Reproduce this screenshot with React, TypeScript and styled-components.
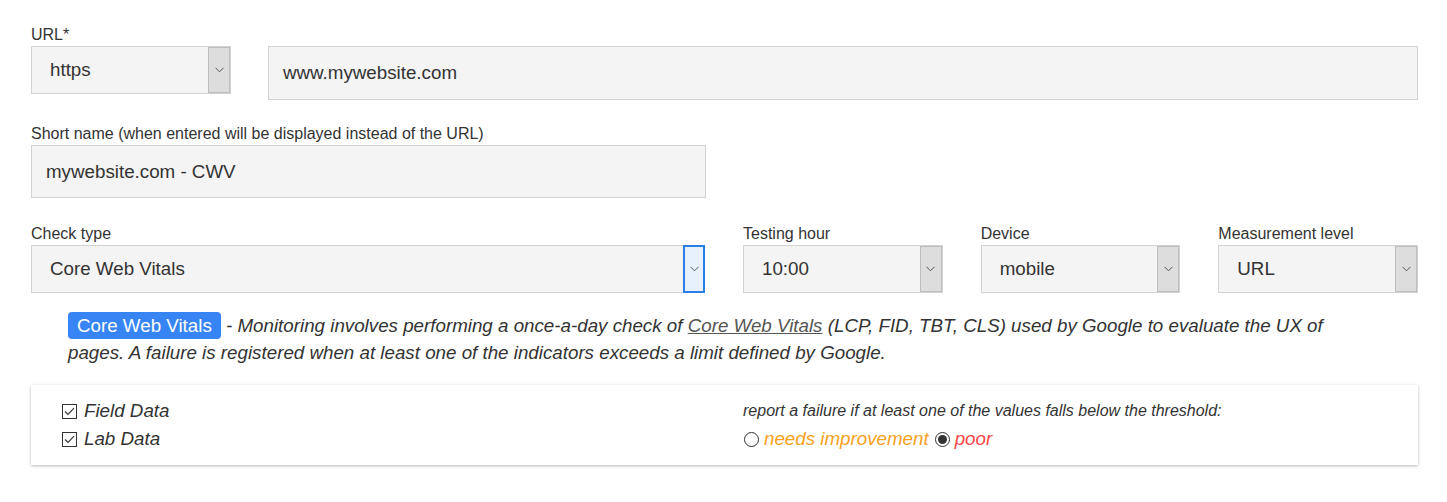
import styled, { createGlobalStyle } from "styled-components";

const GlobalStyle = createGlobalStyle`
  body {
    margin: 0;
    background: #fff;
    font-family: "Liberation Sans", Arial, sans-serif;
    color: #333;
  }
`;

const Page = styled.div`
  width: 1387px;
  padding: 23px 29px 20px 31px;
  display: flex;
  flex-direction: column;
`;

const Field = styled.div<{ $mb?: number }>`
  display: flex;
  flex-direction: column;
  margin-bottom: ${(p) => p.$mb ?? 0}px;
`;

const Label = styled.label`
  font-size: 16px;
  line-height: 20px;
  padding-top: 2px;
  margin-bottom: 1px;
  color: #333;
`;

const UrlRow = styled.div`
  display: flex;
  align-items: flex-start;
  gap: 37px;
  margin-bottom: 22px;
`;

const TypeRow = styled.div`
  display: grid;
  grid-template-columns: 674px repeat(3, 1fr);
  column-gap: 38px;
`;

const Box = styled.div<{ $h: number; $w?: number; $pad: number; $grow?: boolean }>`
  box-sizing: border-box;
  height: ${(p) => p.$h}px;
  width: ${(p) => (p.$w ? `${p.$w}px` : "100%")};
  flex: ${(p) => (p.$grow ? "1 1 auto" : "none")};
  background: #f4f4f4;
  border: 1px solid #d2d2d2;
  display: flex;
  align-items: center;
  justify-content: space-between;
  padding-left: ${(p) => p.$pad}px;
  font-size: 18.75px;
  color: #333;
`;

const Arrow = styled.span<{ $focus?: boolean }>`
  box-sizing: border-box;
  align-self: stretch;
  width: 22px;
  display: flex;
  align-items: center;
  justify-content: center;
  background: ${(p) => (p.$focus ? "#e6f1fc" : "#dddddd")};
  border: ${(p) => (p.$focus ? "2px solid #2a7fe6" : "1px solid #bdbdbd")};
  margin: ${(p) => (p.$focus ? "-1px" : "0")};
  svg {
    width: 9px;
    height: 6px;
  }
`;

const Chevron = () => (
  <svg viewBox="0 0 9 6">
    <polyline points="0.5,0.8 4.5,4.8 8.5,0.8" fill="none" stroke="#555" strokeWidth="1" />
  </svg>
);

const Select = ({ value, width, focus }: { value: string; width?: number; focus?: boolean }) => (
  <Box $h={48} $w={width} $pad={18}>
    <span>{value}</span>
    <Arrow $focus={focus}>
      <Chevron />
    </Arrow>
  </Box>
);

const Description = styled.p`
  margin: 19px 0 19px;
  padding: 0 50px 0 37px;
  font-size: 18.75px;
  line-height: 27px;
  font-style: italic;
  color: #333;
`;

const Badge = styled.span`
  display: inline-block;
  background: #3784f5;
  color: #fff;
  font-style: normal;
  padding: 0 9px;
  border-radius: 4px;
  line-height: 27px;
`;

const Link = styled.a`
  color: #555;
  text-decoration: underline;
`;

const Card = styled.div`
  display: grid;
  grid-template-columns: 674px 1fr;
  column-gap: 38px;
  padding: 12px 0;
  background: #fff;
  box-shadow: 0 1px 3px rgba(0, 0, 0, 0.28);
`;

const Column = styled.div<{ $pl?: number }>`
  display: flex;
  flex-direction: column;
  padding-left: ${(p) => p.$pl ?? 0}px;
`;

const Option = styled.div`
  display: flex;
  align-items: center;
  height: 28px;
  font-size: 18.75px;
  font-style: italic;
  color: #333;
`;

const CheckBox = styled.span`
  box-sizing: border-box;
  width: 15px;
  height: 15px;
  border: 1px solid #333;
  margin-right: 7px;
  display: flex;
  align-items: center;
  justify-content: center;
  svg {
    width: 11px;
    height: 9px;
  }
`;

const Hint = styled.div`
  height: 28px;
  line-height: 28px;
  font-size: 16px;
  font-style: italic;
  color: #333;
`;

const Radio = styled.span<{ $checked?: boolean }>`
  box-sizing: border-box;
  width: 15px;
  height: 15px;
  border-radius: 50%;
  border: 1px solid #333;
  margin: 0 5px 0 1px;
  display: flex;
  align-items: center;
  justify-content: center;
  &::after {
    content: "";
    display: ${(p) => (p.$checked ? "block" : "none")};
    width: 9px;
    height: 9px;
    border-radius: 50%;
    background: #333;
  }
`;

const Level = styled.span<{ $color: string }>`
  color: ${(p) => p.$color};
  margin-right: 5px;
`;

const Check = ({ label }: { label: string }) => (
  <Option>
    <CheckBox>
      <svg viewBox="0 0 11 9">
        <polyline points="1,4.5 4,7.5 10,1.2" fill="none" stroke="#333" strokeWidth="1.1" />
      </svg>
    </CheckBox>
    {label}
  </Option>
);

export default function App() {
  return (
    <>
      <GlobalStyle />
      <Page>
        <Field>
          <Label>URL*</Label>
          <UrlRow>
            <Select value="https" width={200} />
            <Box $h={54} $pad={14} $grow>
              www.mywebsite.com
            </Box>
          </UrlRow>
        </Field>

        <Field $mb={24}>
          <Label>Short name (when entered will be displayed instead of the URL)</Label>
          <Box $h={53} $w={675} $pad={14}>
            mywebsite.com - CWV
          </Box>
        </Field>

        <TypeRow>
          <Field>
            <Label>Check type</Label>
            <Select value="Core Web Vitals" focus />
          </Field>
          <Field>
            <Label>Testing hour</Label>
            <Select value="10:00" />
          </Field>
          <Field>
            <Label>Device</Label>
            <Select value="mobile" />
          </Field>
          <Field>
            <Label>Measurement level</Label>
            <Select value="URL" />
          </Field>
        </TypeRow>

        <Description>
          <Badge>Core Web Vitals</Badge> - Monitoring involves performing a once-a-day check of{" "}
          <Link>Core Web Vitals</Link> (LCP, FID, TBT, CLS) used by Google to evaluate the UX of pages. A
          failure is registered when at least one of the indicators exceeds a limit defined by Google.
        </Description>

        <Card>
          <Column $pl={31}>
            <Check label="Field Data" />
            <Check label="Lab Data" />
          </Column>
          <Column>
            <Hint>report a failure if at least one of the values falls below the threshold:</Hint>
            <Option>
              <Radio />
              <Level $color="#f7a11d">needs improvement</Level>
              <Radio $checked />
              <Level $color="#ff4747">poor</Level>
            </Option>
          </Column>
        </Card>
      </Page>
    </>
  );
}
